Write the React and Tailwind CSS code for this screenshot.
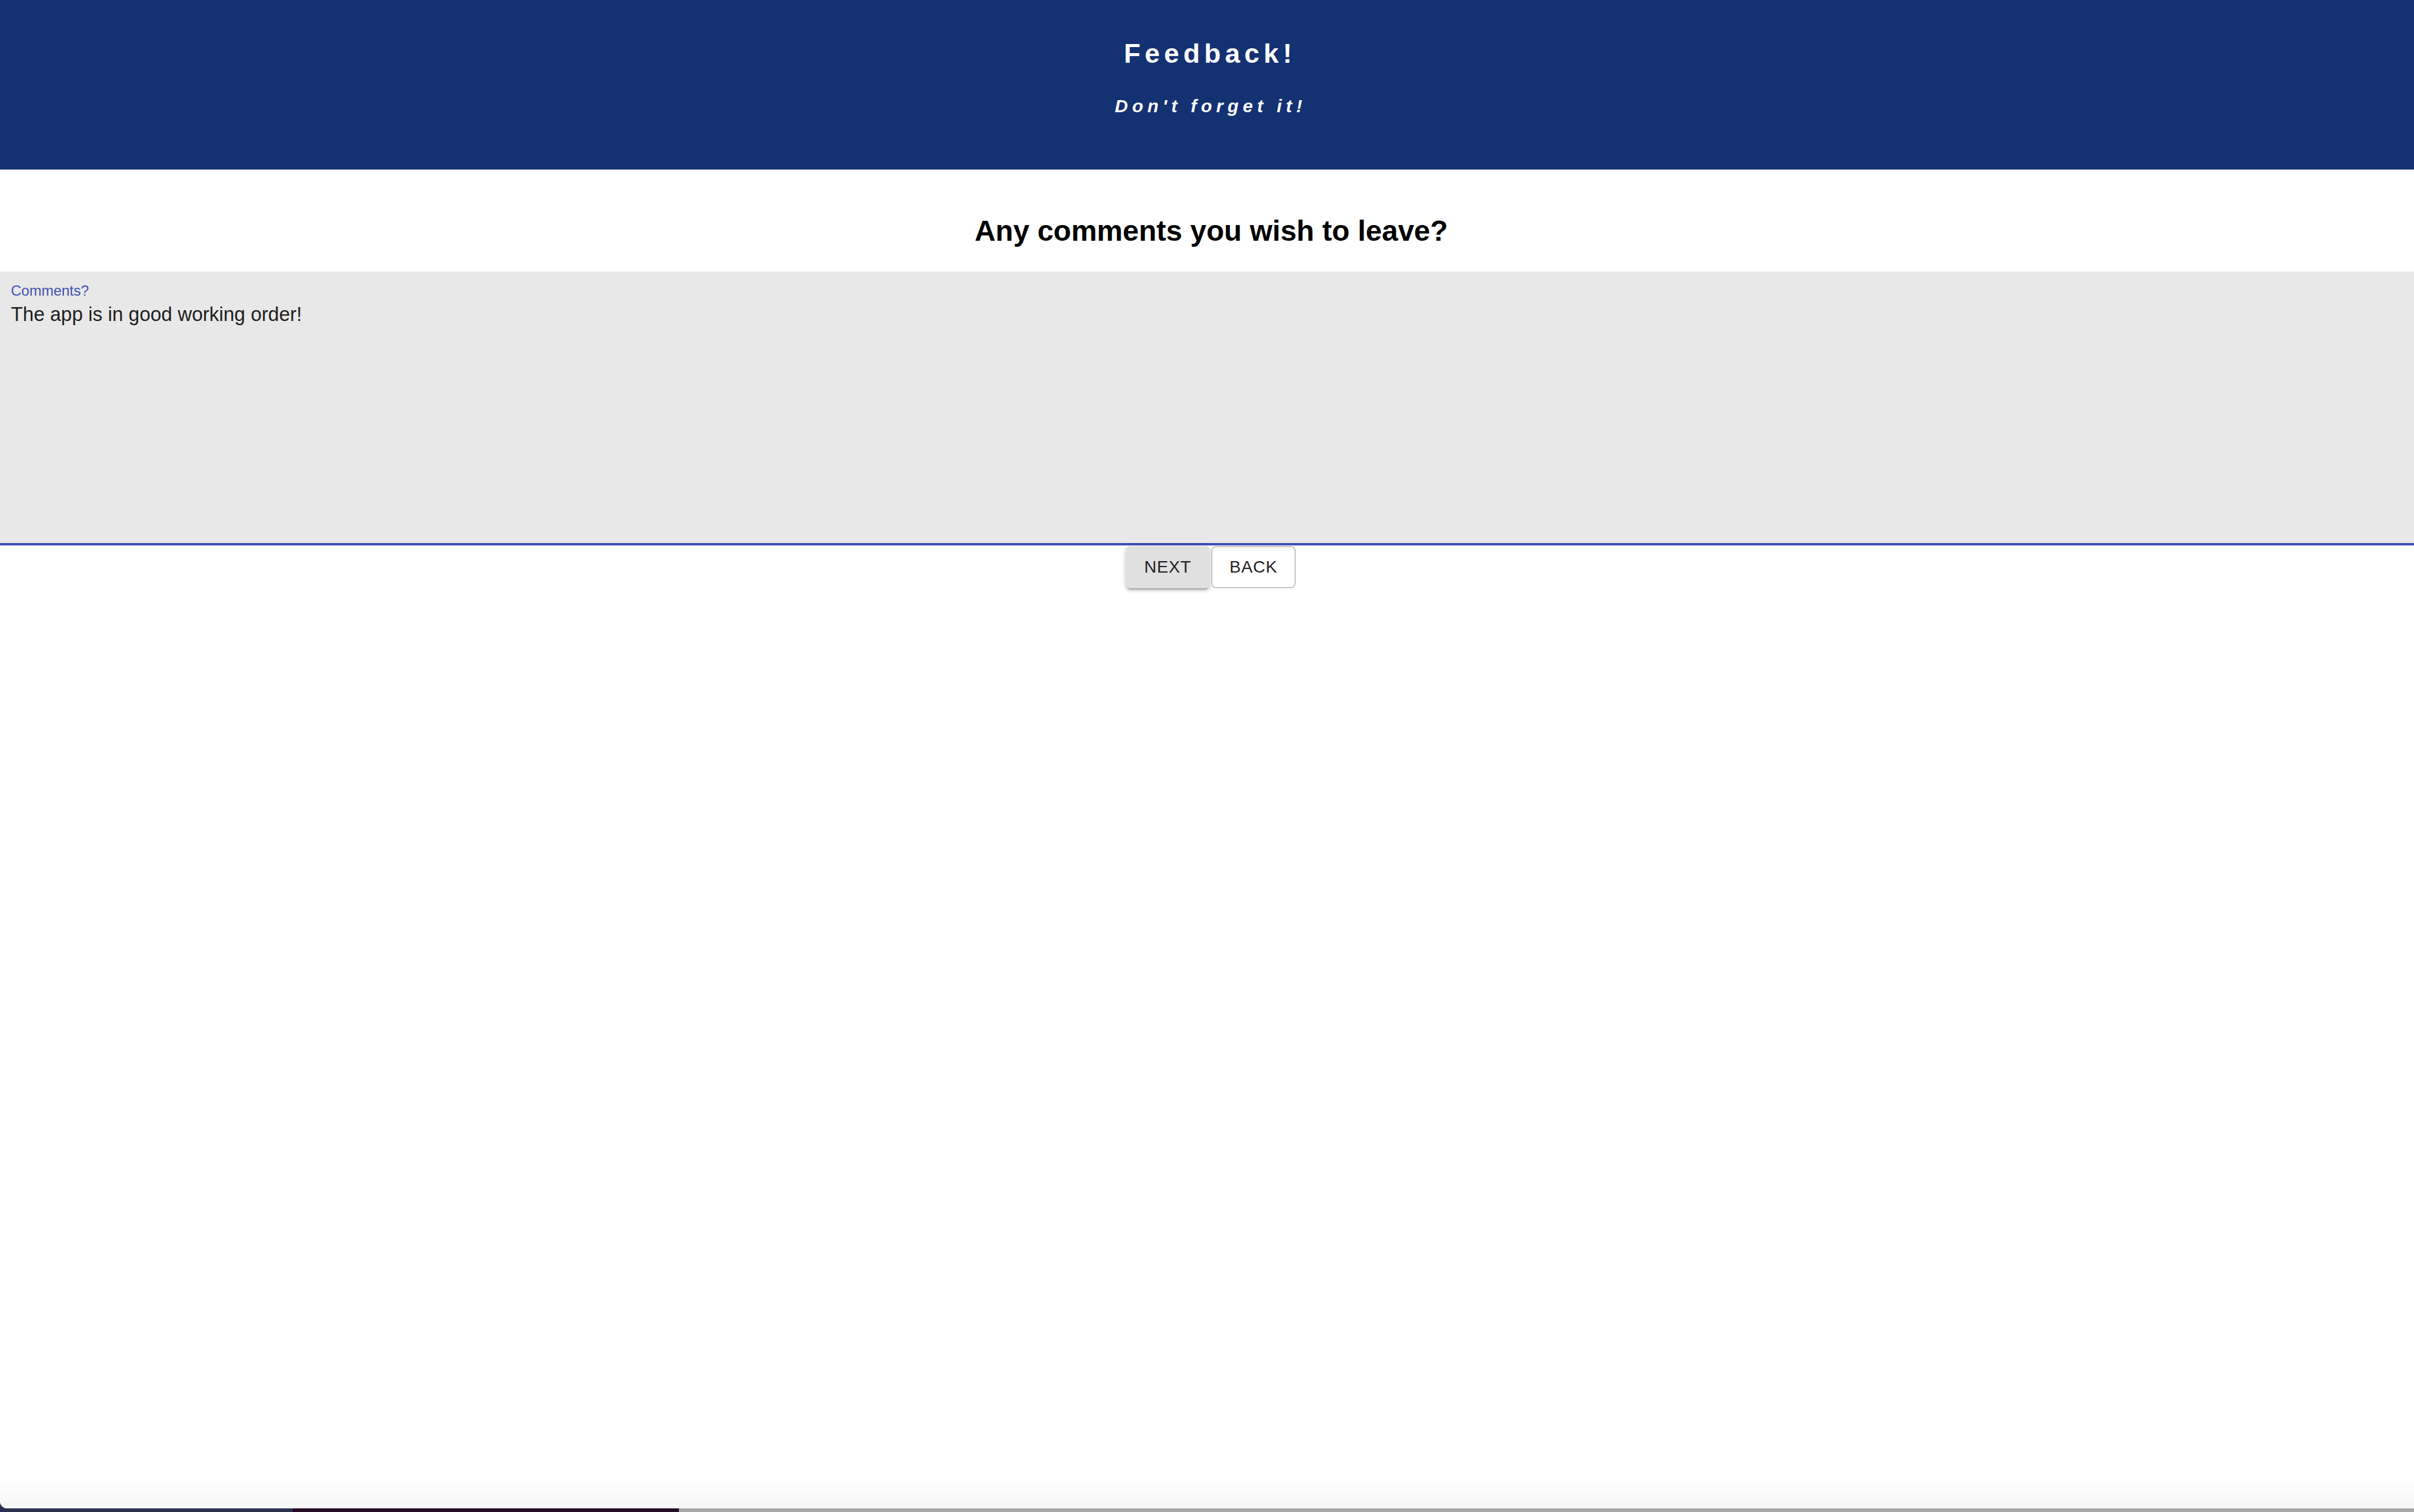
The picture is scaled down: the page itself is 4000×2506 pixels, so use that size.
import React from "react";

export default function App() {
  const font = { fontFamily: '"Liberation Sans", Arial, Helvetica, sans-serif' };
  return (
    <div className="h-[2506px] w-full flex flex-col bg-[#2a3050]" style={font}>
      <div className="flex-1 flex flex-col bg-white rounded-bl-[12px] overflow-hidden">
        <header className="h-[281px] shrink-0 bg-[#143172] flex flex-col items-center pt-[63px]">
          <h1 className="text-[45px] leading-[52px] font-bold text-white tracking-[7px] pl-[10px]">Feedback!</h1>
          <p className="mt-[43px] text-[30px] leading-[36px] font-bold italic text-white tracking-[7px] pl-[12px]">Don't forget it!</p>
        </header>
        <div className="pt-[74px] pb-[39px] flex justify-center pl-[14px]">
          <h2 className="text-[48px] leading-[56px] font-bold text-black">Any comments you wish to leave?</h2>
        </div>
        <div className="h-[454px] shrink-0 bg-[#e8e8e8] border-b-4 border-[#3f51b5] px-[18px] pt-[18px]">
          <div className="text-[24px] leading-[28px] text-[#3f51b5]">Comments?</div>
          <div className="mt-[6px] text-[32.5px] leading-[38px] text-[#1e1e1e]">The app is in good working order!</div>
        </div>
        <div className="mt-[1px] flex justify-center gap-[2px] pl-[12px]">
          <button className="w-[140px] h-[70px] rounded-[8px] bg-[#e0e0e0] text-[28px] tracking-[0.8px] text-[#212121] flex items-center justify-center shadow-[0px_6px_2px_-4px_rgba(0,0,0,0.2),0px_4px_4px_0px_rgba(0,0,0,0.14),0px_2px_10px_0px_rgba(0,0,0,0.12)]">NEXT</button>
          <button className="w-[140px] h-[70px] rounded-[8px] bg-white border-2 border-[#c4c4c4] text-[28px] tracking-[0.8px] text-[#212121] flex items-center justify-center">BACK</button>
        </div>
        <div className="flex-1" />
        <div className="h-[50px] bg-gradient-to-b from-white to-[#f6f6f6]" />
      </div>
      <div className="h-[6px] flex shrink-0">
        <div className="w-[485px] bg-[#2a3050]" />
        <div className="w-[640px] bg-[#260a26]" />
        <div className="flex-1 bg-[#a8a8a8]" />
      </div>
    </div>
  );
}
